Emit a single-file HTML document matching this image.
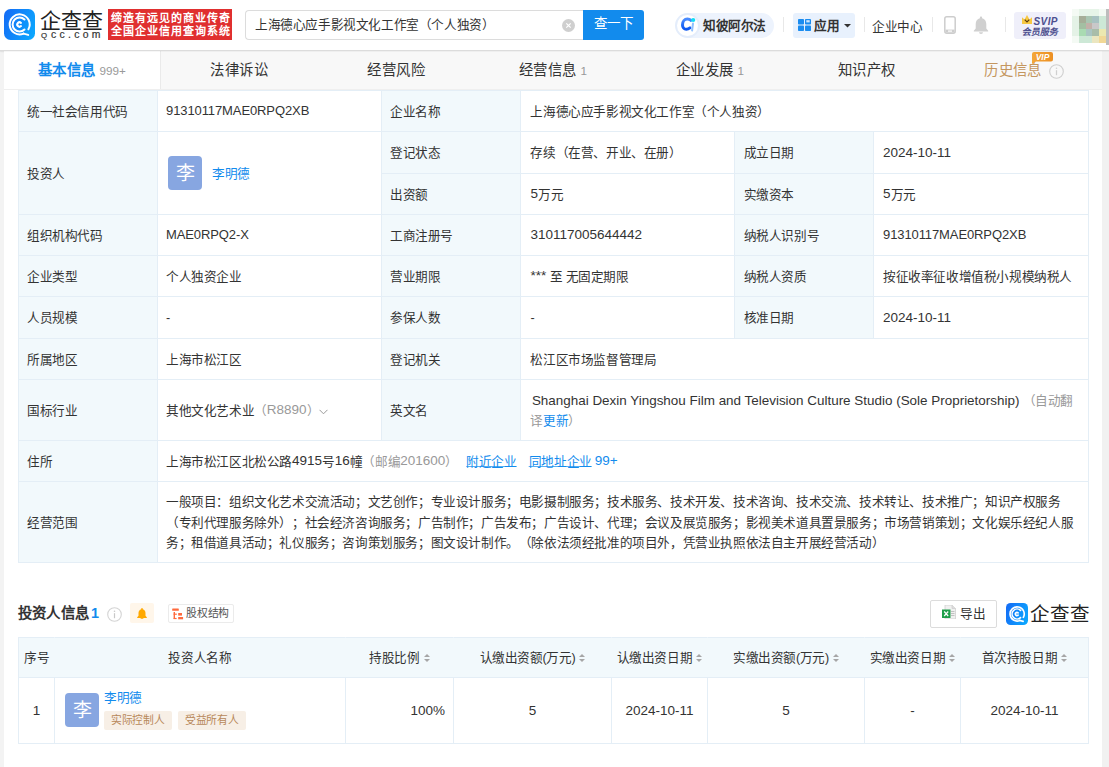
<!DOCTYPE html>
<html lang="zh-CN"><head><meta charset="utf-8">
<style>
*{box-sizing:border-box;margin:0;padding:0}
html,body{text-spacing-trim:space-all;width:1109px;height:767px;overflow:hidden;background:#f3f3f3;font-family:"Liberation Sans",sans-serif;color:#333}
.a{position:absolute}
.nw{white-space:nowrap}
#hdr{left:0;top:0;width:1109px;height:51px;background:#fff;border-bottom:1px solid #dcdcdc;box-shadow:0 1px 2px rgba(0,0,0,.05)}
#card{left:4px;top:51px;width:1098px;height:716px;background:#fff}
#tabs{left:4px;top:51px;width:1098px;height:38.5px;background:#f8f8f8;border-bottom:1px solid #efefef}
.tab{position:absolute;top:0;height:38px;width:156.86px;text-align:center;font-size:14.4px;letter-spacing:.4px;line-height:38px;color:#333;white-space:nowrap}
.tab .n{font-size:11.7px;color:#999;margin-left:4px;letter-spacing:0}
.c{position:absolute;display:flex;align-items:center;font-size:12.6px;letter-spacing:-.4px;line-height:19.8px;padding:3px 8px 0;color:#333;border-left:1px solid #e4eef6;border-top:1px solid #e4eef6;white-space:nowrap}
.lb{background:#f2f9fc}
.bl{color:#128bed}
.gr{color:#999}
.ul{text-decoration:underline;text-decoration-thickness:1px;text-underline-offset:0px;text-decoration-color:rgba(18,139,237,.7)}
.en{font-size:13.5px;letter-spacing:0;position:relative;top:-1px}
.id{font-size:13px;letter-spacing:-.1px;position:relative;top:-1px}
.f126{font-size:12.6px;letter-spacing:-.4px}
.h{position:absolute;white-space:nowrap}
.sep{position:absolute;top:17px;width:1px;height:15px;background:#e8e8e8}
.ic{position:absolute;display:block}
.srt{display:inline-block;width:6px;height:9px;margin-left:4px;vertical-align:-1px;position:relative}
.srt:before{content:"";position:absolute;left:0;top:0;border:3px solid transparent;border-top:0;border-bottom:3.5px solid #a6a6a6}
.srt:after{content:"";position:absolute;left:0;top:4.8px;border:3px solid transparent;border-bottom:0;border-top:3.5px solid #a6a6a6}
</style></head><body>
<div id="hdr" class="a"></div>

<!-- logo -->
<svg class="ic" style="left:4px;top:9px" width="31" height="31" viewBox="0 0 31 31">
 <defs><linearGradient id="lg" x1="0" y1=".3" x2="1" y2=".7"><stop offset="0" stop-color="#146ff6"/><stop offset="1" stop-color="#0ca6fe"/></linearGradient></defs>
 <rect width="31" height="31" rx="6.5" fill="url(#lg)"/>
 <path d="M24.4 20.3A10 10 0 1 0 19.6 24.6" fill="none" stroke="#fff" stroke-width="2" stroke-linecap="round"/>
 <path d="M19.6 24.6L24.2 25.9" stroke="#fff" stroke-width="2" stroke-linecap="round"/>
 <path d="M20.5 10.5A7 7 0 1 0 20.5 20.5" fill="none" stroke="#fff" stroke-width="2" stroke-linecap="round"/>
 <path d="M17 13.9A2.2 2.2 0 1 0 17 17.1" fill="none" stroke="#fff" stroke-width="2.1" stroke-linecap="round"/>
</svg>
<div class="h" style="left:40px;top:6px;font-size:21px;letter-spacing:0;line-height:30px;color:#222">企查查</div>
<div class="h" style="left:41px;top:28.5px;font-size:10.4px;letter-spacing:3.3px;line-height:12px;color:#333;-webkit-text-stroke:.2px #333"><span style="font-size:7.8px;letter-spacing:4px">Q</span>cc.com</div>
<div class="h" style="left:108px;top:9px;width:124px;height:31px;background:#e02f2f;color:#fff;font-size:11px;font-weight:bold;line-height:13.7px;padding:2.5px 0 0 2.5px;letter-spacing:1px">缔造有远见的商业传奇<br>全国企业信用查询系统</div>

<!-- search -->
<div class="h" style="left:245px;top:10px;width:339px;height:30px;border:1px solid #dcdcdc;border-right:0;border-radius:4px 0 0 4px;background:#fff"></div>
<div class="h" style="left:255px;top:15px;font-size:12.6px;letter-spacing:-.4px;line-height:20px;color:#333">上海德心应手影视文化工作室（个人独资）</div>
<svg class="ic" style="left:561.5px;top:18.5px" width="13" height="13" viewBox="0 0 13 13"><circle cx="6.5" cy="6.5" r="6.5" fill="#cfcfcf"/><path d="M4.3 4.3l4.4 4.4M8.7 4.3l-4.4 4.4" stroke="#fff" stroke-width="1.2"/></svg>
<div class="h" style="left:583px;top:10px;width:61px;height:30px;background:#128bed;border-radius:0 3px 3px 0;color:#fff;font-size:13.5px;letter-spacing:-.3px;line-height:28px;text-align:center">查一下</div>

<!-- zhibi -->
<div class="h" style="left:687px;top:12.5px;width:87px;height:25.5px;background:#edf3fd;border-radius:0 13px 13px 0"></div>
<div class="h" style="left:675px;top:12.5px;width:25px;height:25.5px;border-radius:50%;background:#fff;border:2px solid #e4edfb"></div>
<svg class="ic" style="left:679px;top:16px" width="18" height="18" viewBox="0 0 18 18">
 <defs><linearGradient id="cg" x1="0" y1="0" x2="0" y2="1"><stop offset="0" stop-color="#4a8cff"/><stop offset="1" stop-color="#0a55f0"/></linearGradient></defs>
 <path d="M11.8 4.3C10.9 3.3 9.6 3 8.4 3 5.5 3 3.5 5.6 3.5 8.9c0 2.6 1.6 4.3 3.8 4.3 1.3 0 2.5-.5 3.6-1.3" fill="none" stroke="url(#cg)" stroke-width="3" stroke-linecap="round"/>
 <path d="M14 7.5l-.9 7" stroke="#8fc0ff" stroke-width="2" stroke-linecap="round"/>
 <circle cx="14.2" cy="4" r="2.1" fill="#12dcf5"/>
</svg>
<div class="h" style="left:703px;top:16px;font-size:12.6px;letter-spacing:-.4px;line-height:20px;font-weight:bold;color:#333">知彼阿尔法</div>
<div class="sep" style="left:783px"></div>
<div class="h" style="left:793px;top:13px;width:62px;height:25px;background:#e8f1fd;border-radius:3px"></div>
<svg class="ic" style="left:798px;top:19px" width="13" height="12" viewBox="0 0 13 12">
 <rect x="0" y="0" width="6" height="5.5" rx=".8" fill="#1a8cf0"/><rect x="7" y="0" width="6" height="5.5" rx=".8" fill="#1a8cf0"/><rect x="8.3" y="1.2" width="3.4" height="2.2" fill="#cfe6fd"/>
 <rect x="0" y="6.5" width="6" height="5.5" rx=".8" fill="#1a8cf0"/><rect x="7" y="6.5" width="6" height="5.5" rx=".8" fill="#1a8cf0"/>
</svg>
<div class="h" style="left:814px;top:16px;font-size:12.6px;letter-spacing:-.4px;line-height:20px;font-weight:bold;color:#333">应用</div>
<svg class="ic" style="left:843.5px;top:24px" width="7" height="4" viewBox="0 0 7 4"><path d="M0 0h7L3.5 3.5z" fill="#333"/></svg>
<div class="sep" style="left:864px"></div>
<div class="h" style="left:872px;top:16.5px;font-size:12.6px;letter-spacing:-.4px;line-height:20px;color:#333">企业中心</div>
<div class="sep" style="left:932px"></div>
<svg class="ic" style="left:944px;top:16px" width="12" height="18" viewBox="0 0 12 18"><rect x=".8" y=".8" width="10.4" height="16.4" rx="2" fill="none" stroke="#cdcdcd" stroke-width="1.5"/><rect x="1.5" y="13.6" width="9" height="3" fill="#cdcdcd"/><rect x="4" y="14.5" width="4" height="1.2" fill="#fff"/></svg>
<svg class="ic" style="left:973px;top:16px" width="16" height="18" viewBox="0 0 16 18"><path d="M8 .5c.7 0 1.1.5 1.1 1.1v.7c2.7.6 4.2 2.9 4.2 5.6v4.5l1.9 2.3v.8H.8v-.8l1.9-2.3V7.9c0-2.7 1.5-5 4.2-5.6v-.7C6.9 1 7.3.5 8 .5z" fill="#d0d0d0"/><path d="M6 16.3h4a2 1.6 0 0 1-4 0z" fill="#d0d0d0"/></svg>
<div class="sep" style="left:1005px"></div>
<div class="h" style="left:1014px;top:12px;width:52px;height:26.5px;background:#efeffa;border-radius:3px"></div>
<svg class="ic" style="left:1021.5px;top:15px" width="10" height="9" viewBox="0 0 10 9"><path d="M0 2.2l2.5 2.3L5 0l2.5 4.5L10 2.2V9H0z" fill="#f7c843"/><path d="M2.7 4.6L5 7l2.3-2.4" fill="none" stroke="#5a3c0c" stroke-width="1.2"/></svg>
<div class="h" style="left:1033.5px;top:14.5px;font-size:10px;line-height:14px;font-weight:bold;font-style:italic;color:#4d4f8f;letter-spacing:.4px">SVIP</div>
<div class="h" style="left:1021.5px;top:25.5px;font-size:9px;line-height:13px;font-weight:bold;color:#4d4f8f;letter-spacing:0;transform:skewX(-10deg)">会员服务</div>

<!-- avatar mosaic -->
<div class="h" style="left:1072px;top:9px;width:34px;height:34px;display:grid;grid-template-columns:repeat(5,6.8px);grid-template-rows:repeat(5,6.8px)">
 <i style="background:#f4faf4"></i><i style="background:#e6f4e8"></i><i style="background:#e6f4e8"></i><i style="background:#e6f4e8"></i><i style="background:#f4faf4"></i>
 <i style="background:#e4f2e6"></i><i style="background:#a6ae98"></i><i style="background:#a9c6b2"></i><i style="background:#a8c2c2"></i><i style="background:#cde8d6"></i>
 <i style="background:#e4f2e6"></i><i style="background:#a3bfa2"></i><i style="background:#c2b1a9"></i><i style="background:#c9c8c9"></i><i style="background:#cde8d6"></i>
 <i style="background:#e4f2e6"></i><i style="background:#a9dbb2"></i><i style="background:#aac5c2"></i><i style="background:#a9bda9"></i><i style="background:#ece8b0"></i>
 <i style="background:#f4faf4"></i><i style="background:#cde8d6"></i><i style="background:#cde8d6"></i><i style="background:#ebe6c0"></i><i style="background:#f1d896"></i>
</div>
<div class="h" style="left:1106px;top:9px;width:3px;height:36px;background:#bdbdbd"></div>

<div id="card" class="a"></div>
<div class="a" style="left:1102px;top:51px;width:7px;height:716px;background:#f1f1f1"></div>
<div id="tabs" class="a">
 <div class="tab" style="left:0;background:#fff;color:#128bed;font-weight:bold;border-right:1px solid #eaeaea">基本信息<span class="n" style="font-weight:normal">999+</span></div>
 <div class="tab" style="left:156.86px">法律诉讼</div>
 <div class="tab" style="left:313.71px">经营风险</div>
 <div class="tab" style="left:470.57px">经营信息<span class="n">1</span></div>
 <div class="tab" style="left:627.43px">企业发展<span class="n">1</span></div>
 <div class="tab" style="left:784.29px">知识产权</div>
 <div class="tab" style="left:941.14px;color:#c4965f;text-align:left;padding-left:39px">历史信息</div>
</div>
<div class="a" style="left:0;top:51px;width:1109px;height:1px;background:rgba(0,0,0,.035)"></div>
<svg class="ic" style="left:1031px;top:51.5px" width="22" height="12" viewBox="0 0 22 12"><defs><linearGradient id="vg" x1="0" y1="0" x2="1" y2="0"><stop offset="0" stop-color="#f4a73a"/><stop offset="1" stop-color="#ec8f22"/></linearGradient></defs><path d="M3 0h17a2 2 0 0 1 2 2v5.5a2 2 0 0 1-2 2H5L1 12V2a2 2 0 0 1 2-2z" fill="url(#vg)"/><text x="11.5" y="8.3" font-family="Liberation Sans" font-size="8.5" font-weight="bold" font-style="italic" fill="#fff" text-anchor="middle">VIP</text></svg>
<svg class="ic" style="left:1049px;top:63.5px" width="15" height="15" viewBox="0 0 15 15"><circle cx="7.5" cy="7.5" r="6.8" fill="none" stroke="#cfcfcf" stroke-width="1.1"/><rect x="6.9" y="6.2" width="1.2" height="5" fill="#cfcfcf"/><circle cx="7.5" cy="4.3" r=".8" fill="#cfcfcf"/></svg>
<!-- MAIN TABLE -->
<div class="a" style="left:18px;top:90px;width:1071px;height:473px;border-right:1px solid #e4eef6;border-bottom:1px solid #e4eef6"></div>
<div class="c lb" style="left:18px;top:90px;width:139px;height:41px">统一社会信用代码</div>
<div class="c" style="left:157px;top:90px;width:224px;height:41px"><div><span class="id">91310117MAE0RPQ2XB</span></div></div>
<div class="c lb" style="left:381px;top:90px;width:139px;height:41px">企业名称</div>
<div class="c" style="left:520px;top:90px;width:568px;height:41px;padding-left:9.4px">上海德心应手影视文化工作室（个人独资）</div>
<div class="c lb" style="left:18px;top:131px;width:139px;height:83px">投资人</div>
<div class="c" style="left:157px;top:131px;width:224px;height:83px"></div>
<div class="h" style="left:168px;top:156px;width:34px;height:34px;border-radius:4px;background:#87a6e1;color:#fff;font-size:19px;line-height:35px;text-align:center">李</div>
<div class="h bl" style="left:212px;top:163.5px;font-size:12.6px;letter-spacing:-.4px;line-height:20px">李明德</div>
<div class="c lb" style="left:381px;top:131px;width:139px;height:42px">登记状态</div>
<div class="c" style="left:520px;top:131px;width:214px;height:42px;padding-left:9.4px">存续（在营、开业、在册）</div>
<div class="c lb" style="left:734px;top:131px;width:139px;height:42px;padding-left:8.7px">成立日期</div>
<div class="c" style="left:873px;top:131px;width:215px;height:42px;padding-left:9px"><div><span class="en">2024-10-11</span></div></div>
<div class="c lb" style="left:381px;top:173px;width:139px;height:41px">出资额</div>
<div class="c" style="left:520px;top:173px;width:214px;height:41px;padding-left:9.4px"><div><span class="en">5</span>万元</div></div>
<div class="c lb" style="left:734px;top:173px;width:139px;height:41px;padding-left:8.7px">实缴资本</div>
<div class="c" style="left:873px;top:173px;width:215px;height:41px;padding-left:9px"><div><span class="en">5</span>万元</div></div>
<div class="c lb" style="left:18px;top:214px;width:139px;height:41px">组织机构代码</div>
<div class="c" style="left:157px;top:214px;width:224px;height:41px"><div><span class="id">MAE0RPQ2-X</span></div></div>
<div class="c lb" style="left:381px;top:214px;width:139px;height:41px">工商注册号</div>
<div class="c" style="left:520px;top:214px;width:214px;height:41px;padding-left:9.4px"><div><span class="en" style="font-size:13.5px">310117005644442</span></div></div>
<div class="c lb" style="left:734px;top:214px;width:139px;height:41px;padding-left:8.7px">纳税人识别号</div>
<div class="c" style="left:873px;top:214px;width:215px;height:41px;padding-left:9px"><div><span class="id">91310117MAE0RPQ2XB</span></div></div>
<div class="c lb" style="left:18px;top:255px;width:139px;height:41px">企业类型</div>
<div class="c" style="left:157px;top:255px;width:224px;height:41px">个人独资企业</div>
<div class="c lb" style="left:381px;top:255px;width:139px;height:41px">营业期限</div>
<div class="c" style="left:520px;top:255px;width:214px;height:41px;padding-left:9.4px"><div><span class="en">*** </span>至 无固定期限</div></div>
<div class="c lb" style="left:734px;top:255px;width:139px;height:41px;padding-left:8.7px">纳税人资质</div>
<div class="c" style="left:873px;top:255px;width:215px;height:41px;padding-left:9px">按征收率征收增值税小规模纳税人</div>
<div class="c lb" style="left:18px;top:296px;width:139px;height:42px">人员规模</div>
<div class="c" style="left:157px;top:296px;width:224px;height:42px">-</div>
<div class="c lb" style="left:381px;top:296px;width:139px;height:42px">参保人数</div>
<div class="c" style="left:520px;top:296px;width:214px;height:42px;padding-left:9.4px">-</div>
<div class="c lb" style="left:734px;top:296px;width:139px;height:42px;padding-left:8.7px">核准日期</div>
<div class="c" style="left:873px;top:296px;width:215px;height:42px;padding-left:9px"><div><span class="en">2024-10-11</span></div></div>
<div class="c lb" style="left:18px;top:338px;width:139px;height:41px">所属地区</div>
<div class="c" style="left:157px;top:338px;width:224px;height:41px">上海市松江区</div>
<div class="c lb" style="left:381px;top:338px;width:139px;height:41px">登记机关</div>
<div class="c" style="left:520px;top:338px;width:568px;height:41px;padding-left:9.4px">松江区市场监督管理局</div>
<div class="c lb" style="left:18px;top:379px;width:139px;height:61px">国标行业</div>
<div class="c" style="left:157px;top:379px;width:224px;height:61px"><div>其他文化艺术业<span class="gr">（<span class="en">R8890</span>）</span><svg style="margin-left:-.5px;margin-top:1px" width="9" height="6" viewBox="0 0 9 6"><path d="M.5 .8L4.5 4.8 8.5 .8" fill="none" stroke="#999" stroke-width="1"/></svg></div></div>
<div class="c lb" style="left:381px;top:379px;width:139px;height:61px">英文名</div>
<div class="c" style="left:520px;top:379px;width:568px;height:61px;padding-left:9.4px"><div><span style="font-size:13.45px;letter-spacing:0;margin-left:1.5px">Shanghai Dexin Yingshou Film and Television Culture Studio (Sole Proprietorship)</span><span class="gr">&nbsp;（自动翻</span><br><span class="gr">译</span><span class="bl">更新</span><span class="gr">）</span></div></div>
<div class="c lb" style="left:18px;top:440px;width:139px;height:41px">住所</div>
<div class="c" style="left:157px;top:440px;width:931px;height:41px"><div>上海市松江区北松公路<span class="en">4915</span>号<span class="en">16</span>幢<span class="gr">（邮编<span class="en">201600</span>）</span><span class="bl ul" style="margin-left:8.5px">附近企业</span><span class="bl" style="margin-left:12px"><span class="ul">同地址企业</span> <span class="en">99+</span></span></div></div>
<div class="c lb" style="left:18px;top:481px;width:139px;height:81px">经营范围</div>
<div class="c" style="left:157px;top:481px;width:931px;height:81px"><div style="line-height:20.7px;margin-top:-1px">一般项目：组织文化艺术交流活动；文艺创作；专业设计服务；电影摄制服务；技术服务、技术开发、技术咨询、技术交流、技术转让、技术推广；知识产权服务<br>（专利代理服务除外）；社会经济咨询服务；广告制作；广告发布；广告设计、代理；会议及展览服务；影视美术道具置景服务；市场营销策划；文化娱乐经纪人服<br>务；租借道具活动；礼仪服务；咨询策划服务；图文设计制作。（除依法须经批准的项目外，凭营业执照依法自主开展经营活动）</div></div>

<!-- INVESTOR SECTION -->
<div class="h" style="left:18px;top:603px;font-size:14.4px;letter-spacing:.2px;line-height:20px;font-weight:bold;color:#333">投资人信息<span class="bl" style="margin-left:2px;letter-spacing:0">1</span></div>
<svg class="ic" style="left:107px;top:606.5px" width="15" height="15" viewBox="0 0 15 15"><circle cx="7.5" cy="7.5" r="6.8" fill="none" stroke="#d4d4d4" stroke-width="1.1"/><rect x="6.9" y="6.2" width="1.2" height="5" fill="#c8c8c8"/><circle cx="7.5" cy="4.3" r=".8" fill="#c8c8c8"/></svg>
<div class="h" style="left:130px;top:603px;width:24px;height:19.5px;background:#fff6ea;border-radius:2px"></div>
<svg class="ic" style="left:137px;top:607.5px" width="10" height="11.5" viewBox="0 0 10 11.5"><path d="M5 0c.5 0 .8.3.8.8v.4c1.8.5 2.7 2 2.7 3.8v2.8l1.3 1.5v.6H.2v-.6L1.5 7.8V5c0-1.8.9-3.3 2.7-3.8V.8C4.2.3 4.5 0 5 0z" fill="#ffa800"/><path d="M3.6 10.3h2.8a1.4 1.2 0 0 1-2.8 0z" fill="#ffa800"/></svg>
<div class="h" style="left:168px;top:604px;width:66px;height:18.5px;border:1px solid #ebebeb;border-radius:2px;background:#fff"></div>
<svg class="ic" style="left:172px;top:608px" width="12" height="12" viewBox="0 0 12 12"><rect x=".2" y=".4" width="6.6" height="2.3" rx=".5" fill="#ff6a3d"/><rect x="1.6" y="4" width="1.4" height="7" fill="#ff6a3d"/><rect x="1.6" y="5.6" width="3.2" height="1.2" fill="#ff6a3d"/><rect x="1.6" y="9.9" width="3" height="1.2" fill="#ff6a3d"/><rect x="6.2" y="5" width="3.8" height="2.6" fill="#ff6a3d"/><rect x="6.2" y="9" width="4.9" height="2.3" fill="#ff6a3d"/></svg>
<div class="h" style="left:186px;top:604px;font-size:10.8px;letter-spacing:-.2px;line-height:19px;color:#555">股权结构</div>

<div class="h" style="left:930px;top:599.5px;width:67px;height:28px;border:1px solid #dcdcdc;border-radius:2px;background:#fff"></div>
<svg class="ic" style="left:942px;top:605px" width="14" height="14" viewBox="0 0 14 14"><path d="M3 0h7l3.5 3.5V14H3z" fill="#f0f0f0" stroke="#cfcfcf" stroke-width=".8"/><path d="M10 0v3.5h3.5" fill="#ddd" stroke="#cfcfcf" stroke-width=".8"/><rect x="9" y="6" width="3.5" height=".9" fill="#bbb"/><rect x="9" y="8" width="3.5" height=".9" fill="#bbb"/><rect x="9" y="10" width="3.5" height=".9" fill="#bbb"/><rect x="0" y="4.5" width="8.5" height="8.5" fill="#1e9e4a"/><path d="M2.2 6.5l4 4.5M6.2 6.5l-4 4.5" stroke="#fff" stroke-width="1.2"/></svg>
<div class="h" style="left:960px;top:603.5px;font-size:12.6px;letter-spacing:-.4px;line-height:20px;color:#333">导出</div>
<svg class="ic" style="left:1006px;top:603px" width="22" height="22" viewBox="0 0 31 31">
 <rect width="31" height="31" rx="6.5" fill="url(#lg)"/>
 <path d="M24.4 20.3A10 10 0 1 0 19.6 24.6" fill="none" stroke="#fff" stroke-width="2.3" stroke-linecap="round"/>
 <path d="M19.6 24.6L24.2 25.9" stroke="#fff" stroke-width="2.3" stroke-linecap="round"/>
 <path d="M20.5 10.5A7 7 0 1 0 20.5 20.5" fill="none" stroke="#fff" stroke-width="2.3" stroke-linecap="round"/>
 <path d="M17 13.9A2.2 2.2 0 1 0 17 17.1" fill="none" stroke="#fff" stroke-width="2.4" stroke-linecap="round"/>
</svg>
<div class="h" style="left:1030px;top:600px;font-size:19.5px;letter-spacing:-.1px;line-height:28px;color:#222">企查查</div>

<!-- investor table -->
<div class="a" style="left:18px;top:637px;width:1071px;height:107px;border-right:1px solid #e4eef6;border-bottom:1px solid #e4eef6"></div>
<div class="c lb" style="left:18px;top:637px;width:1070px;height:40px"></div>
<div class="c lb" style="left:18px;top:637px;width:36px;height:40px;padding:3px 0 0 5px">序号</div>
<div class="c lb" style="left:54px;top:637px;width:291px;height:40px;justify-content:center;padding:3px 0 0;border-left-color:transparent">投资人名称</div>
<div class="c lb" style="left:345px;top:637px;width:108px;height:40px;justify-content:center;padding:3px 0 0;border-left-color:transparent"><div>持股比例<i class="srt"></i></div></div>
<div class="c lb" style="left:453px;top:637px;width:158px;height:40px;justify-content:center;padding:3px 0 0;border-left-color:transparent"><div>认缴出资额(万元)<i class="srt"></i></div></div>
<div class="c lb" style="left:611px;top:637px;width:96px;height:40px;justify-content:center;padding:3px 0 0;border-left-color:transparent"><div>认缴出资日期<i class="srt"></i></div></div>
<div class="c lb" style="left:707px;top:637px;width:157px;height:40px;justify-content:center;padding:3px 0 0;border-left-color:transparent"><div>实缴出资额(万元)<i class="srt"></i></div></div>
<div class="c lb" style="left:864px;top:637px;width:96px;height:40px;justify-content:center;padding:3px 0 0;border-left-color:transparent"><div>实缴出资日期<i class="srt"></i></div></div>
<div class="c lb" style="left:960px;top:637px;width:128px;height:40px;justify-content:center;padding:3px 0 0;border-left-color:transparent"><div>首次持股日期<i class="srt"></i></div></div>
<div class="c" style="left:18px;top:677px;width:36px;height:66px;justify-content:center;padding:3px 0 0"><div><span class="en">1</span></div></div>
<div class="c" style="left:54px;top:677px;width:291px;height:66px;"></div>
<div class="h" style="left:65px;top:693px;width:34px;height:34px;border-radius:4px;background:#87a6e1;color:#fff;font-size:19px;line-height:35px;text-align:center">李</div>
<div class="h bl" style="left:104px;top:688px;font-size:12.6px;letter-spacing:-.4px;line-height:20px">李明德</div>
<div class="h" style="left:104px;top:711px;width:67.5px;height:18.5px;background:#f7efe6;border-radius:2px;color:#b8885a;font-size:10.8px;letter-spacing:-.2px;line-height:18.5px;text-align:center">实际控制人</div>
<div class="h" style="left:178px;top:711px;width:67.5px;height:18.5px;background:#f7efe6;border-radius:2px;color:#b8885a;font-size:10.8px;letter-spacing:-.2px;line-height:18.5px;text-align:center">受益所有人</div>
<div class="c" style="left:345px;top:677px;width:108px;height:66px;justify-content:flex-end"><div><span class="en">100%</span></div></div>
<div class="c" style="left:453px;top:677px;width:158px;height:66px;justify-content:center;padding:3px 0 0"><div><span class="en">5</span></div></div>
<div class="c" style="left:611px;top:677px;width:96px;height:66px;justify-content:center;padding:3px 0 0"><div><span class="en">2024-10-11</span></div></div>
<div class="c" style="left:707px;top:677px;width:157px;height:66px;justify-content:center;padding:3px 0 0"><div><span class="en">5</span></div></div>
<div class="c" style="left:864px;top:677px;width:96px;height:66px;justify-content:center;padding:3px 0 0"><div><span class="en">-</span></div></div>
<div class="c" style="left:960px;top:677px;width:128px;height:66px;justify-content:center;padding:3px 0 0"><div><span class="en">2024-10-11</span></div></div>

</body></html>
